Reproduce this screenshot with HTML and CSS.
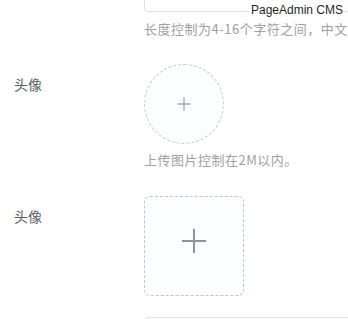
FILE: index.html
```html
<!DOCTYPE html>
<html lang="en">

<head>
    <meta charset="UTF-8">
    <meta name="viewport" content="width=device-width, initial-scale=1.0">
    <title>头像上传</title>
    <link rel="stylesheet" href="styles.css">
</head>

<body>
    <div class="watermark">PageAdmin CMS</div>

    <form class="form">
        <div class="form-item first">
            <label class="form-label"></label>
            <div class="form-content">
                <div class="input"></div>
                <div class="tip">长度控制为4-16个字符之间，中文算2个字符</div>
            </div>
        </div>

        <div class="form-item avatar-item">
            <label class="form-label">头像</label>
            <div class="form-content">
                <div class="uploader circle">
                    <svg width="14" height="14" viewBox="0 0 14 14">
                        <path d="M7 0.5V13.5M0.5 7H13.5" stroke="#a4a9b1" stroke-width="1.4" fill="none" />
                    </svg>
                </div>
                <div class="tip">上传图片控制在2M以内。</div>
            </div>
        </div>

        <div class="form-item square-item">
            <label class="form-label">头像</label>
            <div class="form-content">
                <div class="uploader square">
                    <svg width="26" height="26" viewBox="0 0 26 26">
                        <path d="M13 1V25M1 13H25" stroke="#8c939d" stroke-width="2" fill="none" />
                    </svg>
                </div>
            </div>
        </div>

        <div class="form-item last">
            <label class="form-label"></label>
            <div class="form-content">
                <div class="input"></div>
            </div>
        </div>
    </form>
</body>

</html>
```

FILE: styles.css
```css
* {
    box-sizing: border-box;
    margin: 0;
    padding: 0;
}

html,
body {
    overflow: hidden;
    height: 100%;
}

body {
    font-family: "Noto Sans CJK SC", "Noto Sans", sans-serif;
    background-color: #fff;
    position: relative;
}

.watermark {
    position: absolute;
    top: 2px;
    right: 3px;
    padding: 0 2px;
    font-family: "Liberation Sans", Arial, sans-serif;
    font-size: 12px;
    line-height: 17px;
    white-space: nowrap;
    color: #1f1f1f;
    background-color: #fff;
}

.form {
    padding-left: 14px;
}

.form-item {
    display: flex;
}

.form-label {
    width: 130px;
    flex-shrink: 0;
    font-size: 14px;
    line-height: 40px;
    color: #5a5e66;
}

.form-content {
    width: 204px;
    flex-shrink: 0;
}

.input {
    width: 260px;
    height: 40px;
    border: 1px solid #dcdfe6;
    border-radius: 4px;
    background-color: #fff;
}

.first .input {
    margin-top: -28px;
}

.tip {
    font-size: 13px;
    letter-spacing: 0.5px;
    line-height: 20px;
    color: #a0a0a0;
    white-space: nowrap;
    overflow: hidden;
}

.first .tip {
    margin-top: 7px;
}

.avatar-item {
    margin-top: 25px;
}

.avatar-item .tip {
    margin-top: 6px;
}

.square-item {
    margin-top: 26px;
}

.last {
    margin-top: 21px;
}

.uploader {
    display: flex;
    align-items: center;
    justify-content: center;
    border: 1px dashed #c0c4cc;
    background-color: #fbfdff;
}

.circle {
    width: 80px;
    height: 80px;
    border-radius: 50%;
}

.square {
    width: 100px;
    height: 100px;
    border-radius: 6px;
    padding-bottom: 10px;
}
```
